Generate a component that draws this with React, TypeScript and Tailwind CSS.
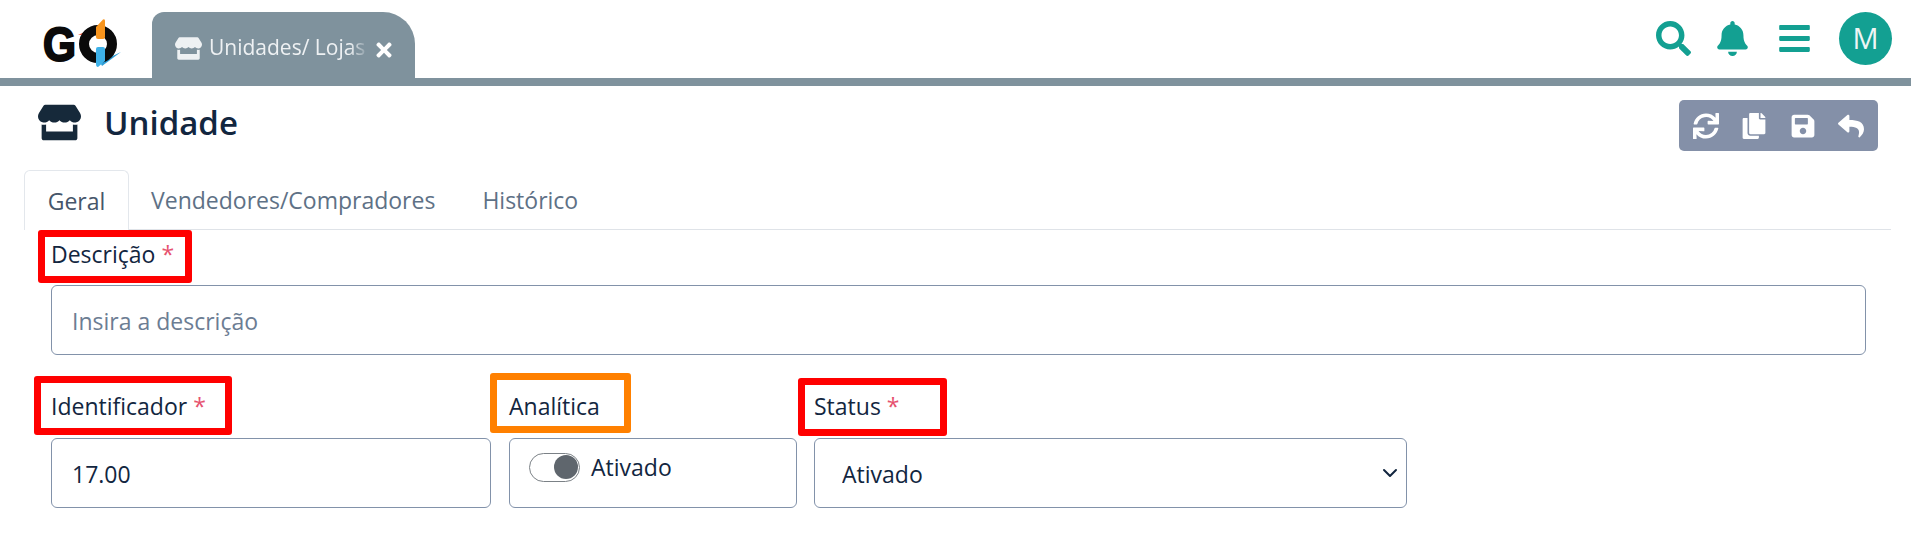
import { FaStore, FaTimes, FaSearch, FaBell, FaBars, FaSync, FaCopy, FaSave, FaReply } from "react-icons/fa";

const Logo = () => (
  <svg width="84" height="54" viewBox="40 16 84 54" className="block">
    <polygon points="78,35 96,27 96,34" fill="#ee4b2b" />
    <polygon points="100,62 121,52 102,66" fill="#2f9fd8" />
    <text
      x="43"
      y="61"
      fontFamily="'Liberation Sans', sans-serif"
      fontWeight="700"
      fontSize="48"
      textLength="33"
      lengthAdjust="spacingAndGlyphs"
      fill="#0a0a0a"
      stroke="#0a0a0a"
      strokeWidth="2"
    >
      G
    </text>
    <circle cx="98" cy="44" r="14" fill="none" stroke="#0a0a0a" strokeWidth="10" />
    <path d="M96 27 L103 19.5 Q105 18.5 105 21 V37 Q105 39 103 39 H98 Q96 39 96 37 Z" fill="#f7941d" />
    <path d="M98 47 H103 Q105 47 105 49 V61 L98 67 Q96 67 96 64 V49 Q96 47 98 47 Z" fill="#3eb1e8" />
  </svg>
);

const Required = () => <span className="text-[#e6526f]"> *</span>;

const Marker = ({ className }: { className: string }) => (
  <div className={`absolute rounded-[3px] border-[7px] ${className}`} />
);

export default function App() {
  return (
    <div className="h-[557px] w-full overflow-hidden bg-white font-['Open_Sans',sans-serif] text-[23px] text-[#12263f]">
      <header className="flex h-[86px] items-end border-b-8 border-[#7f929d] pl-[40px] pr-[19px]">
        <div className="mb-[8px] w-[112px]">
          <Logo />
        </div>
        <div className="flex h-[66px] w-[263px] items-center rounded-tl-[12px] rounded-tr-[32px] bg-[#7f929d] pl-[23px] pt-[6px] text-[21px] text-[#eef1f3]">
          <FaStore size={27} className="shrink-0" />
          <span className="ml-[7px] w-[160px] whitespace-nowrap [mask-image:linear-gradient(to_right,black_88%,transparent)]">
            Unidades/ Lojas
          </span>
          <FaTimes size={22} className="ml-[4px] mt-[3px] shrink-0 text-white" />
        </div>
        <div className="ml-auto flex h-[78px] items-center text-[#13a092]">
          <FaSearch size={35} className="mb-[2px]" />
          <FaBell size={35} className="mb-[2px] ml-[24px]" />
          <FaBars size={35} className="mb-[2px] ml-[27px]" />
          <div className="mb-[2px] ml-[27px] flex h-[53px] w-[53px] items-center justify-center rounded-full bg-[#13a092] text-[29px] text-[#eef5f4]">
            M
          </div>
        </div>
      </header>

      <div className="flex h-[84px] items-start justify-between pl-[38px] pr-[33px]">
        <div className="flex items-center pt-[15px]">
          <FaStore size={43} className="text-[#16293a]" />
          <h1 className="ml-[23px] text-[33px] font-semibold leading-[40px]">Unidade</h1>
        </div>
        <div className="mt-[14px] flex h-[51px] w-[199px] items-center justify-between rounded-[5px] bg-[#8490a8] px-[14px] text-white">
          <FaSync size={26} />
          <FaCopy size={26} />
          <FaSave size={26} />
          <FaReply size={26} />
        </div>
      </div>

      <nav className="ml-[24px] mr-[20px] flex h-[60px] border-b border-[#dfe3e8] text-[#5e7186]">
        <div className="flex h-[60px] w-[105px] items-center justify-center rounded-t-[6px] border border-b-0 border-[#e3e7ec] bg-white pt-[2px] text-[#46566a]">
          Geral
        </div>
        <div className="ml-[22px] flex items-center pt-[2px]">Vendedores/Compradores</div>
        <div className="ml-[47px] flex items-center pt-[2px]">Histórico</div>
      </nav>

      <main className="pl-[51px] pr-[45px]">
        <div className="relative flex h-[55px] items-center pb-[6px]">
          <Marker className="-left-[13px] top-0 h-[53px] w-[154px] border-[#ff0000]" />
          <label>
            Descrição
            <Required />
          </label>
        </div>
        <input
          placeholder="Insira a descrição"
          className="h-[70px] w-full rounded-[6px] border border-[#8292aa] px-[20px] pt-[2px] outline-none placeholder:text-[#6c7d93]"
        />

        <div className="mt-[83px] flex gap-x-[18px]">
          <div className="w-[440px]">
            <div className="relative -mt-[83px] flex h-[83px] items-center pt-[20px]">
              <Marker className="-left-[17px] top-[21px] h-[59px] w-[198px] border-[#ff0000]" />
              <label>
                Identificador
                <Required />
              </label>
            </div>
            <input
              readOnly
              value="17.00"
              className="h-[70px] w-full rounded-[6px] border border-[#8292aa] px-[20px] pt-[2px] outline-none"
            />
          </div>

          <div className="w-[288px]">
            <div className="relative -mt-[83px] flex h-[83px] items-center pt-[20px]">
              <Marker className="-left-[19px] top-[18px] h-[60px] w-[141px] border-[#ff8000]" />
              <label>Analítica</label>
            </div>
            <div className="h-[70px] rounded-[6px] border border-[#8292aa] pl-[19px] pt-[11px]">
              <div className="flex items-center">
                <div className="flex h-[29px] w-[51px] items-center justify-end rounded-full border border-[#7b8186] pr-[1px]">
                  <div className="h-[24px] w-[24px] rounded-full bg-[#5f666d]" />
                </div>
                <span className="ml-[11px]">Ativado</span>
              </div>
            </div>
          </div>

          <div className="ml-[-1px] w-[593px]">
            <div className="relative -mt-[83px] flex h-[83px] items-center pt-[20px]">
              <Marker className="-left-[16px] top-[23px] h-[58px] w-[149px] border-[#ff0000]" />
              <label>
                Status
                <Required />
              </label>
            </div>
            <div className="relative h-[70px]">
              <select className="h-full w-full appearance-none rounded-[6px] border border-[#8292aa] bg-white pl-[27px] pt-[2px] outline-none">
                <option>Ativado</option>
              </select>
              <svg
                viewBox="0 0 16 16"
                className="pointer-events-none absolute right-[9px] top-[27px] h-[16px] w-[16px]"
                fill="none"
                stroke="#12263f"
                strokeWidth="2"
                strokeLinecap="round"
                strokeLinejoin="round"
              >
                <path d="M2 5l6 6 6-6" />
              </svg>
            </div>
          </div>
        </div>
      </main>
    </div>
  );
}
